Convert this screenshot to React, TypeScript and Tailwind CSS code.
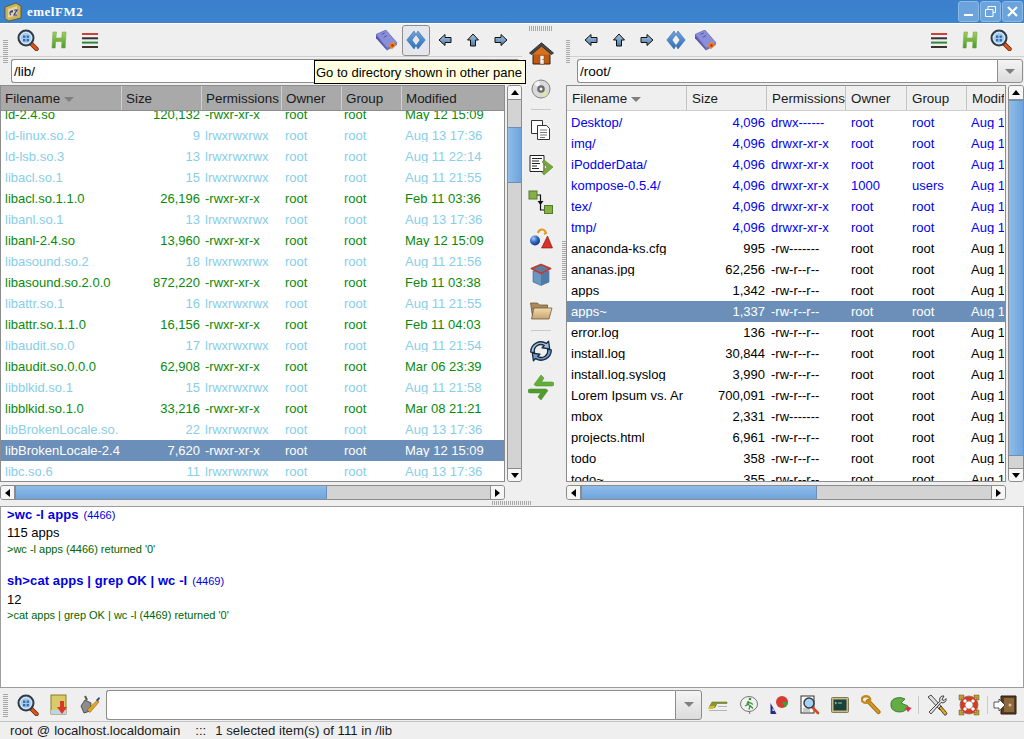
import type { ReactNode } from 'react'

type Row = { name: string; size: string; perm: string; owner?: string; group?: string; date: string; kind: 'exe' | 'link' | 'dir' | 'file'; selected?: boolean }

const leftRows: Row[] = [
  { name: 'ld-2.4.so', size: '120,132', perm: '-rwxr-xr-x', date: 'May 12 15:09', kind: 'exe' },
  { name: 'ld-linux.so.2', size: '9', perm: 'lrwxrwxrwx', date: 'Aug 13 17:36', kind: 'link' },
  { name: 'ld-lsb.so.3', size: '13', perm: 'lrwxrwxrwx', date: 'Aug 11 22:14', kind: 'link' },
  { name: 'libacl.so.1', size: '15', perm: 'lrwxrwxrwx', date: 'Aug 11 21:55', kind: 'link' },
  { name: 'libacl.so.1.1.0', size: '26,196', perm: '-rwxr-xr-x', date: 'Feb 11 03:36', kind: 'exe' },
  { name: 'libanl.so.1', size: '13', perm: 'lrwxrwxrwx', date: 'Aug 13 17:36', kind: 'link' },
  { name: 'libanl-2.4.so', size: '13,960', perm: '-rwxr-xr-x', date: 'May 12 15:09', kind: 'exe' },
  { name: 'libasound.so.2', size: '18', perm: 'lrwxrwxrwx', date: 'Aug 11 21:56', kind: 'link' },
  { name: 'libasound.so.2.0.0', size: '872,220', perm: '-rwxr-xr-x', date: 'Feb 11 03:38', kind: 'exe' },
  { name: 'libattr.so.1', size: '16', perm: 'lrwxrwxrwx', date: 'Aug 11 21:55', kind: 'link' },
  { name: 'libattr.so.1.1.0', size: '16,156', perm: '-rwxr-xr-x', date: 'Feb 11 04:03', kind: 'exe' },
  { name: 'libaudit.so.0', size: '17', perm: 'lrwxrwxrwx', date: 'Aug 11 21:54', kind: 'link' },
  { name: 'libaudit.so.0.0.0', size: '62,908', perm: '-rwxr-xr-x', date: 'Mar 06 23:39', kind: 'exe' },
  { name: 'libblkid.so.1', size: '15', perm: 'lrwxrwxrwx', date: 'Aug 11 21:58', kind: 'link' },
  { name: 'libblkid.so.1.0', size: '33,216', perm: '-rwxr-xr-x', date: 'Mar 08 21:21', kind: 'exe' },
  { name: 'libBrokenLocale.so.', size: '22', perm: 'lrwxrwxrwx', date: 'Aug 13 17:36', kind: 'link' },
  { name: 'libBrokenLocale-2.4', size: '7,620', perm: '-rwxr-xr-x', date: 'May 12 15:09', kind: 'exe', selected: true },
  { name: 'libc.so.6', size: '11', perm: 'lrwxrwxrwx', date: 'Aug 13 17:36', kind: 'link' },
]

const rightRows: Row[] = [
  { name: 'Desktop/', size: '4,096', perm: 'drwx------', date: 'Aug 1', kind: 'dir' },
  { name: 'img/', size: '4,096', perm: 'drwxr-xr-x', date: 'Aug 1', kind: 'dir' },
  { name: 'iPodderData/', size: '4,096', perm: 'drwxr-xr-x', date: 'Aug 1', kind: 'dir' },
  { name: 'kompose-0.5.4/', size: '4,096', perm: 'drwxr-xr-x', owner: '1000', group: 'users', date: 'Aug 1', kind: 'dir' },
  { name: 'tex/', size: '4,096', perm: 'drwxr-xr-x', date: 'Aug 1', kind: 'dir' },
  { name: 'tmp/', size: '4,096', perm: 'drwxr-xr-x', date: 'Aug 1', kind: 'dir' },
  { name: 'anaconda-ks.cfg', size: '995', perm: '-rw-------', date: 'Aug 1', kind: 'file' },
  { name: 'ananas.jpg', size: '62,256', perm: '-rw-r--r--', date: 'Aug 1', kind: 'file' },
  { name: 'apps', size: '1,342', perm: '-rw-r--r--', date: 'Aug 1', kind: 'file' },
  { name: 'apps~', size: '1,337', perm: '-rw-r--r--', date: 'Aug 1', kind: 'file', selected: true },
  { name: 'error.log', size: '136', perm: '-rw-r--r--', date: 'Aug 1', kind: 'file' },
  { name: 'install.log', size: '30,844', perm: '-rw-r--r--', date: 'Aug 1', kind: 'file' },
  { name: 'install.log.syslog', size: '3,990', perm: '-rw-r--r--', date: 'Aug 1', kind: 'file' },
  { name: 'Lorem Ipsum vs. Ar', size: '700,091', perm: '-rw-r--r--', date: 'Aug 1', kind: 'file' },
  { name: 'mbox', size: '2,331', perm: '-rw-------', date: 'Aug 1', kind: 'file' },
  { name: 'projects.html', size: '6,961', perm: '-rw-r--r--', date: 'Aug 1', kind: 'file' },
  { name: 'todo', size: '358', perm: '-rw-r--r--', date: 'Aug 1', kind: 'file' },
  { name: 'todo~', size: '355', perm: '-rw-r--r--', date: 'Aug 1', kind: 'file' },
]

const kindColor = {
  exe: 'text-[#0a8a0a]',
  link: 'text-[#87cee8]',
  dir: 'text-[#0000f0]',
  file: 'text-black',
}

/* icons */

function Defs() {
  return (
    <svg className="absolute w-0 h-0">
      <defs>
        <linearGradient id="arrow" x1="0" y1="0" x2="0" y2="1">
          <stop offset="0" stopColor="#a9c4de" />
          <stop offset="1" stopColor="#4d7ca8" />
        </linearGradient>
        <linearGradient id="hgreen" x1="0" y1="0" x2="0" y2="1">
          <stop offset="0" stopColor="#a3cf5c" />
          <stop offset="1" stopColor="#4c9a2a" />
        </linearGradient>
        <linearGradient id="folder" x1="0" y1="0" x2="0" y2="1">
          <stop offset="0" stopColor="#f3dcb0" />
          <stop offset="1" stopColor="#c9a36c" />
        </linearGradient>
        <linearGradient id="diamond" x1="0" y1="0" x2="0" y2="1">
          <stop offset="0" stopColor="#6fa3dc" />
          <stop offset="1" stopColor="#3070b8" />
        </linearGradient>
        <radialGradient id="ball" cx=".35" cy=".3" r=".8">
          <stop offset="0" stopColor="#a8c8f0" />
          <stop offset=".5" stopColor="#2f66c4" />
          <stop offset="1" stopColor="#122c66" />
        </radialGradient>
      </defs>
    </svg>
  )
}

function Magnifier() {
  return (
    <svg width="22" height="22" viewBox="0 0 22 22">
      <path d="M13.5 14l6 6" stroke="#5a2a10" strokeWidth="4.4" strokeLinecap="round" />
      <path d="M14 14.500l5.500 5.500" stroke="#e0521b" strokeWidth="3" strokeLinecap="round" />
      <circle cx="9" cy="9" r="7.500" fill="#cfe3f5" stroke="#2f3b45" strokeWidth="2" />
      <circle cx="9" cy="9" r="5" fill="#a9c9ea" />
      <rect x="6" y="6.500" width="2.400" height="2.400" fill="#2f6fb5" />
      <rect x="9.600" y="6.500" width="2.400" height="2.400" fill="#2f6fb5" />
      <rect x="6" y="10" width="2.400" height="2.400" fill="#2f6fb5" />
      <rect x="9.600" y="10" width="2.400" height="2.400" fill="#2f6fb5" />
    </svg>
  )
}

function HIcon() {
  return (
    <svg width="18" height="20" viewBox="0 0 18 20">
      <path d="M3 2h3.500L5.800 8h6L12.300 2H16l-.8 16h-3.600l.3-6.500H5.600L5.200 18H2z" fill="url(#hgreen)" stroke="#6fa848" strokeWidth=".6" />
    </svg>
  )
}

function Lines() {
  return (
    <svg width="16" height="15" viewBox="0 0 16 15">
      <rect y="0" width="16" height="2" fill="#d0403a" />
      <rect y="4.300" width="16" height="2" fill="#333" />
      <rect y="8.600" width="16" height="2" fill="#2d8a3a" />
      <rect y="13" width="16" height="2" fill="#40302c" />
    </svg>
  )
}

function Book() {
  return (
    <svg width="22" height="21" viewBox="0 0 20 19">
      <path d="M0 4L9 0l10 11.500-9 5z" fill="#8a8fdc" stroke="#5c60ac" strokeWidth=".6" />
      <path d="M0 4v3.500l10 11v-2z" fill="#565aa8" />
      <path d="M10 16.500l9-5v2l-9 5z" fill="#6d71c0" />
      <path d="M5 4l3-1.400M7 6.500l3-1.400" stroke="#4a4e9a" strokeWidth=".8" />
      <path d="M11 14l4-3.500 3.500 3-4 4z" fill="#e8862a" />
      <circle cx="15" cy="14" r="1.300" fill="#c8381c" />
    </svg>
  )
}

function Diamond() {
  return (
    <svg width="20" height="20" viewBox="0 0 20 20">
      <path d="M8 1L.8 10 8 19l2-3.500L6 10l4-5.500z" fill="url(#diamond)" stroke="#2c639f" strokeWidth=".5" strokeLinejoin="round" />
      <path d="M12 1l7.200 9L12 19l-2-3.500L14 10l-4-5.500z" fill="url(#diamond)" stroke="#2c639f" strokeWidth=".5" strokeLinejoin="round" />
    </svg>
  )
}

function ArrowLeft() {
  return (
    <svg width="14" height="14" viewBox="0 0 14 14">
      <path d="M7 1.500L1 7l6 5.500V9.500h6v-5H7z" fill="url(#arrow)" stroke="#111" strokeWidth="1" strokeLinejoin="round" />
    </svg>
  )
}

function ArrowRight() {
  return (
    <svg width="14" height="14" viewBox="0 0 14 14">
      <path d="M7 1.500L13 7l-6 5.500V9.500H1v-5h6z" fill="url(#arrow)" stroke="#111" strokeWidth="1" strokeLinejoin="round" />
    </svg>
  )
}

function ArrowUp() {
  return (
    <svg width="14" height="14" viewBox="0 0 14 14">
      <path d="M1.500 7L7 1l5.500 6H9.500v6h-5V7z" fill="url(#arrow)" stroke="#111" strokeWidth="1" strokeLinejoin="round" />
    </svg>
  )
}

function Home() {
  return (
    <svg width="25" height="23" viewBox="0 0 25 23">
      <path d="M4 10h17v12H4z" fill="#c05a12" stroke="#3c2008" strokeWidth="1" />
      <path d="M12.500 3.500L21 10.500v2H4v-2z" fill="#d5701c" />
      <path d="M.5 11L12.500.8 24.500 11l-2 1.500-10-8.500-10 8.500z" fill="#45494e" stroke="#1d1f22" strokeWidth=".8" strokeLinejoin="round" />
      <rect x="11" y="13.500" width="4" height="8.500" fill="#f4f4f4" stroke="#7a4a1c" strokeWidth=".5" />
      <rect x="13.500" y="17" width="1" height="1" fill="#333" />
    </svg>
  )
}

function Cd() {
  return (
    <svg width="20" height="20" viewBox="0 0 20 20">
      <circle cx="10" cy="10" r="9" fill="#d9d9d9" stroke="#7f7f7f" />
      <path d="M10 10L3 5a9 9 0 0 1 5-3.500z" fill="#f6f6f6" />
      <path d="M10 10l7 5a9 9 0 0 1-5 3.500z" fill="#dfe6a8" />
      <circle cx="10" cy="10" r="3.800" fill="#6a6a6a" />
      <circle cx="10" cy="10" r="1.500" fill="#f2f2f2" />
    </svg>
  )
}

function Copy() {
  return (
    <svg width="22" height="22" viewBox="0 0 22 22">
      <path d="M1.500 1.500h11v13h-11z" fill="#fff" stroke="#333" />
      <path d="M7.500 6.500h9l3 3v11h-12z" fill="#fff" stroke="#333" />
      <path d="M10 11h7M10 13.500h7M10 16h7M10 18.500h5" stroke="#777" />
    </svg>
  )
}

function MoveDoc() {
  return (
    <svg width="25" height="24" viewBox="0 0 25 24">
      <path d="M1 1.500h14v16H1z" fill="#fff" stroke="#222" />
      <path d="M3 4.500h10M3 7h7M3 9.500h8M3 12h5M3 14.500h7" stroke="#222" strokeWidth="1.200" />
      <path d="M15 6l9 7-9 8-2-2.500 5-5.500-5-5z" fill="#7aa83a" stroke="#4f7d20" strokeWidth=".6" />
    </svg>
  )
}

function TreeIcon() {
  return (
    <svg width="26" height="24" viewBox="0 0 26 24">
      <path d="M8 5h4.500v15h4" stroke="#111" strokeWidth="1.200" fill="none" />
      <path d="M9.500 11h6l-3 4z" fill="#111" />
      <rect x="1" y="1" width="8" height="8" fill="#87b04a" stroke="#557a26" />
      <rect x="16.500" y="15.500" width="8" height="8" fill="#87b04a" stroke="#557a26" />
    </svg>
  )
}

function Shapes() {
  return (
    <svg width="24" height="22" viewBox="0 0 24 22">
      <path d="M12.500 21l6-12 5 12z" fill="#d8302a" stroke="#7d1412" strokeWidth=".6" strokeLinejoin="round" />
      <circle cx="6" cy="13.500" r="5" fill="url(#ball)" />
      <path d="M9 6a4 4 0 0 1 7-2l1 2-2 1" fill="none" stroke="#e09a20" strokeWidth="2" />
    </svg>
  )
}

function BoxIcon() {
  return (
    <svg width="22" height="23" viewBox="0 0 22 23">
      <path d="M3 8v11l8 3.500 8-3.500V8z" fill="#6a97c2" stroke="#41648a" strokeWidth=".6" />
      <path d="M11 11v11.500V11l8-3v11l-8 3.500z" fill="#4f7ba6" />
      <path d="M1.500 5.500L11 1.500l9.500 4L11 10.500z" fill="#5c7f9f" stroke="#bf3a30" strokeWidth="1.800" strokeLinejoin="round" />
    </svg>
  )
}

function FolderOpen() {
  return (
    <svg width="24" height="20" viewBox="0 0 24 20">
      <path d="M1.500 3h7l2 2h8v4H3l1 10z" fill="#b0895a" stroke="#5f4a2f" strokeWidth=".7" />
      <path d="M5 8h18l-3 11H2.500z" fill="url(#folder)" stroke="#5f4a2f" strokeWidth=".7" />
    </svg>
  )
}

function Refresh() {
  return (
    <svg width="26" height="26" viewBox="0 0 24 24">
      <path d="M2.500 13a9.500 9.500 0 0 1 14.500-8l2-2 1 7-7-1 2-2a6 6 0 0 0-9 6.500z" fill="#9dc0e4" stroke="#1c2a3a" strokeWidth="1.200" strokeLinejoin="round" />
      <path d="M21.500 11a9.500 9.500 0 0 1-14.500 8l-2 2-1-7 7 1-2 2a6 6 0 0 0 9-6.500z" fill="#6c9bd0" stroke="#1c2a3a" strokeWidth="1.200" strokeLinejoin="round" />
    </svg>
  )
}

function Swap() {
  return (
    <svg width="26" height="25" viewBox="0 0 26 25">
      <path d="M13 0l-7 9.500 2 1.500H24a1.500 1.500 0 0 0 0-4H13.500l2.500-4z" fill="#64ae3a" stroke="#3f8a24" strokeWidth=".5" strokeLinejoin="round" />
      <path d="M13 25l7-9.500-2-1.500H2a1.500 1.500 0 0 0 0 4h10.500l-2.500 4z" fill="#4f9c2c" stroke="#3f8a24" strokeWidth=".5" strokeLinejoin="round" />
    </svg>
  )
}

function BookmarkDown() {
  return (
    <svg width="18" height="22" viewBox="0 0 18 22">
      <rect x="1" y="1" width="15" height="19" fill="#d8cc6a" stroke="#8b7a2a" />
      <path d="M1 16h15v4H1z" fill="#bcd4ea" />
      <path d="M10 7h4v6h3l-5 7-5-7h3z" fill="#d83a2a" />
    </svg>
  )
}

function Brush() {
  return (
    <svg width="20" height="20" viewBox="0 0 20 20">
      <path d="M5 1l2 4" stroke="#555" strokeWidth="2" />
      <path d="M1 11l4-6 6 3-1 8-6 2z" fill="#8d8d8d" stroke="#333" strokeWidth=".8" />
      <path d="M7 15L17.500 5l1.500 2L10 17.500z" fill="#e3a820" stroke="#6b5010" strokeWidth=".5" />
      <path d="M16 5l3-3 1 1.500-2.500 3z" fill="#2a4a9a" />
    </svg>
  )
}

function Pen() {
  return (
    <svg width="20" height="14" viewBox="0 0 20 14">
      <path d="M4 4h15v1.500H9l-2 4H1z" fill="#8a9a2a" stroke="#55601c" strokeWidth=".5" />
      <path d="M2 8h5L5 11H0z" fill="#d2c030" />
      <path d="M10 8h9v1H10zM1 12h18v1H1z" fill="#b5b5b5" />
    </svg>
  )
}

function Runner() {
  return (
    <svg width="20" height="20" viewBox="0 0 20 20">
      <ellipse cx="10" cy="9" rx="8.500" ry="7.500" fill="#f2f2f2" stroke="#777" />
      <path d="M11 19l-1-3" stroke="#777" />
      <circle cx="11" cy="4" r="1.300" fill="#39953a" />
      <path d="M10 6l-2 3 3 1.500-1 4M10 9l-4 2M8 7l4 1 2 1.500M11 10.500l3 3" stroke="#39953a" strokeWidth="1.300" fill="none" />
    </svg>
  )
}

function Pie() {
  return (
    <svg width="20" height="20" viewBox="0 0 20 20">
      <circle cx="13" cy="7" r="6" fill="#d63a32" />
      <path d="M13 7h6a6 6 0 0 1-3 5.200z" fill="#3aa03a" />
      <path d="M1.500 19V8l6 11z" fill="#252a8c" />
      <path d="M3.500 16V13l2 3z" fill="#eee" />
    </svg>
  )
}

function DocSearch() {
  return (
    <svg width="20" height="20" viewBox="0 0 20 20">
      <rect x="1" y="1" width="13" height="17" fill="#fafafa" stroke="#333" />
      <path d="M3 14h7M3 16h7" stroke="#999" />
      <path d="M12 12l6 6" stroke="#d9481c" strokeWidth="2.600" strokeLinecap="round" />
      <circle cx="9" cy="8" r="5" fill="#a9d0ef" stroke="#2f3b45" strokeWidth="1.400" />
    </svg>
  )
}

function Terminal() {
  return (
    <svg width="18" height="16" viewBox="0 0 18 16">
      <rect x=".5" y=".5" width="17" height="15" rx="1" fill="#c8b98a" stroke="#857a56" />
      <rect x="2.500" y="2.500" width="13" height="11" fill="#18423a" />
      <path d="M4 5l1.500 1L4 7M7 6h4" stroke="#d7e8d7" strokeWidth=".8" fill="none" />
    </svg>
  )
}

function KeyIcon() {
  return (
    <svg width="20" height="20" viewBox="0 0 20 20">
      <path d="M7 6l10.500 11" stroke="#a87414" strokeWidth="4.200" strokeLinecap="round" />
      <path d="M7 6l10.500 11" stroke="#d39a2a" strokeWidth="2" strokeLinecap="round" />
      <ellipse cx="5" cy="4.500" rx="4.200" ry="3.300" fill="none" stroke="#c08a1e" strokeWidth="2.400" />
    </svg>
  )
}

function Leaf() {
  return (
    <svg width="22" height="17" viewBox="0 0 22 17">
      <path d="M1 7a8.500 6 0 0 1 14-4l-4 4 7 3a8.500 6 0 0 1-17 0z" fill="#62ad44" stroke="#2c6b1c" strokeWidth=".8" />
      <path d="M15 12l3 4 3.500-4-3-1.200z" fill="#d8304a" />
    </svg>
  )
}

function Tools() {
  return (
    <svg width="22" height="22" viewBox="0 0 22 22">
      <path d="M2 3l3-2 11 12-2 3z" fill="#ddd" stroke="#222" strokeWidth=".8" />
      <path d="M18 2a3.500 3.500 0 0 0-4 5L3 18l2 2L15 8.500a3.500 3.500 0 0 0 5-4l-2 2-2-1z" fill="#ddd" stroke="#222" strokeWidth=".8" />
      <path d="M13 14l2-2 5.500 6.500a1.500 1.500 0 0 1-2.500 2z" fill="#e3a820" stroke="#222" strokeWidth=".8" />
    </svg>
  )
}

function Lifebuoy() {
  return (
    <svg width="24" height="24" viewBox="0 0 24 24">
      <path d="M2 2h5v2.500H4.500V7H2zM22 2h-5v2.500h2.500V7H22zM2 22h5v-2.500H4.500V17H2zM22 22h-5v-2.500h2.500V17H22z" fill="#caa01e" stroke="#333" strokeWidth=".4" />
      <circle cx="12" cy="12" r="6.500" fill="#fff" stroke="#d83a1e" strokeWidth="4.500" />
      <path d="M7 7l3 3M17 7l-3 3M7 17l3-3M17 17l-3-3" stroke="#fff" strokeWidth="3" />
      <circle cx="12" cy="12" r="9" fill="none" stroke="#5a2010" strokeWidth=".5" />
      <circle cx="12" cy="12" r="4" fill="none" stroke="#5a2010" strokeWidth=".5" />
    </svg>
  )
}

function ExitDoor() {
  return (
    <svg width="24" height="20" viewBox="0 0 24 20">
      <path d="M8 1h15v18H8z" fill="#5a3a1e" stroke="#2c1c0c" />
      <path d="M11 3h10v14H11z" fill="#8a6a3a" />
      <circle cx="17" cy="10" r="1.500" fill="#e8b89a" />
      <path d="M1 7h5V4l6 6-6 6v-3H1z" fill="#fff" stroke="#333" strokeWidth=".8" />
    </svg>
  )
}

/* widgets */

function Grip({ className }: { className: string }) {
  return <div className={`shrink-0 bg-[repeating-linear-gradient(0deg,#a8a8a8_0px,#a8a8a8_1px,transparent_1px,transparent_2px)] ${className}`} />
}

function GripV({ className }: { className: string }) {
  return <div className={`shrink-0 bg-[repeating-linear-gradient(90deg,#a8a8a8_0px,#a8a8a8_1px,transparent_1px,transparent_2px)] ${className}`} />
}

function Tool({ children, wide, active, bar }: { children: ReactNode; wide?: boolean; active?: boolean; bar?: boolean }) {
  return (
    <div className={`h-[31px] flex items-center justify-center shrink-0 ${bar ? 'w-[30.5px]' : wide ? 'w-[31px]' : 'w-[28px]'} ${active ? 'rounded-[3px] border border-[#8f8f8f] bg-[#e6e7ec]' : ''}`}>
      {children}
    </div>
  )
}

function Caret() {
  return <div className="w-0 h-0 border-x-[5px] border-x-transparent border-t-[5px] border-t-[#7f7f7f]" />
}

function Combo({ value }: { value: string }) {
  return (
    <div className="flex h-[24px]">
      <div className="flex-1 min-w-0 bg-white border border-[#8c8c8c] border-r-0 rounded-l-[3px] flex items-center pl-[2px] pt-[2px] text-[13.5px] text-black leading-none">{value}</div>
      <div className="w-[26px] shrink-0 border border-[#8c8c8c] rounded-r-[3px] bg-gradient-to-b from-[#f4f4f4] to-[#dcdcdc] flex items-center justify-center">
        <Caret />
      </div>
    </div>
  )
}

function TriUp() {
  return <div className="w-0 h-0 border-x-[4px] border-x-transparent border-b-[5px] border-b-black" />
}
function TriDown() {
  return <div className="w-0 h-0 border-x-[4px] border-x-transparent border-t-[5px] border-t-black" />
}
function TriLeft() {
  return <div className="w-0 h-0 border-y-[4px] border-y-transparent border-r-[5px] border-r-black" />
}
function TriRight() {
  return <div className="w-0 h-0 border-y-[4px] border-y-transparent border-l-[5px] border-l-black" />
}

function VScroll({ top, thumb, width }: { top: string; thumb: string; width: string }) {
  return (
    <div className={`${width} shrink-0 flex flex-col border border-[#8c8c8c] rounded-[3px] bg-[#d3d3d3] overflow-hidden`}>
      <div className="h-[14px] shrink-0 bg-[#f6f6f6] border-b border-[#8c8c8c] flex items-center justify-center"><TriUp /></div>
      <div className="flex-1 min-h-0 flex flex-col">
        <div className={top} />
        <div className={`${thumb} bg-gradient-to-r from-[#8fbcea] to-[#6ea4dc] border-y border-[#6d8fb3]`} />
      </div>
      <div className="h-[13px] shrink-0 bg-[#f6f6f6] border-t border-[#8c8c8c] flex items-center justify-center"><TriDown /></div>
    </div>
  )
}

function HScroll({ thumb }: { thumb: string }) {
  return (
    <div className="h-[15px] flex border border-[#8c8c8c] rounded-[3px] bg-[#d3d3d3] overflow-hidden">
      <div className="w-[14px] shrink-0 bg-[#f6f6f6] border-r border-[#8c8c8c] flex items-center justify-center"><TriLeft /></div>
      <div className="flex-1 min-w-0 flex">
        <div className={`${thumb} bg-gradient-to-b from-[#8fbcea] to-[#6ea4dc] border-x border-[#6d8fb3]`} />
      </div>
      <div className="w-[14px] shrink-0 bg-[#f6f6f6] border-l border-[#8c8c8c] flex items-center justify-center"><TriRight /></div>
    </div>
  )
}

const leftCols = ['w-[121px]', 'w-[80px]', 'w-[80px]', 'w-[60px]', 'w-[60px]']
const rightCols = ['w-[120px]', 'w-[80px]', 'w-[79px]', 'w-[61px]', 'w-[60px]']
const leftPads = ['pl-[4px]', 'pl-[3px]', 'pl-[3px]', 'pl-[2px]', 'pl-[3px]']
const rightPads = ['pl-[4px]', 'pl-[4px]', 'pl-[5px]', 'pl-[5px]', 'pl-[4px]']

function Header({ dark, last, lastWidth, widths }: { dark?: boolean; last: string; lastWidth: string; widths: string[] }) {
  const labels = ['Filename', 'Size', 'Permissions', 'Owner', 'Group']
  const pad = dark ? 'pl-[4px]' : 'pl-[5px]'
  return (
    <div className={`h-[25px] shrink-0 flex text-[13.4px] leading-none border-b ${dark ? 'bg-[#a9a9a9] border-[#8c8c8c]' : 'bg-[#efefef] border-[#cfcfcf]'} text-[#1a1a1a]`}>
      {labels.map((l, i) => (
        <div key={l} className={`${widths[i]} shrink-0 flex items-center ${pad} pt-[2px] whitespace-nowrap overflow-hidden border-r ${dark ? 'border-[#d0d0d0]' : 'border-[#c4c4c4]'}`}>
          {l}
          {i === 0 && <div className="ml-[4px] w-0 h-0 border-x-[5px] border-x-transparent border-t-[5px] border-t-[#7f7f7f]" />}
        </div>
      ))}
      <div className={`${lastWidth} flex items-center ${pad} pt-[2px] overflow-hidden whitespace-nowrap`}>{last}</div>
    </div>
  )
}

function FileRow({ row, widths, lastWidth, pads }: { row: Row; widths: string[]; lastWidth: string; pads: string[] }) {
  const color = row.selected ? 'text-white bg-[#6b8fb8]' : kindColor[row.kind]
  return (
    <div className={`h-[21px] flex items-center text-[13px] leading-none whitespace-nowrap ${color}`}>
      <div className={`${widths[0]} shrink-0 pl-[4px] overflow-hidden`}>{row.name}</div>
      <div className={`${widths[1]} shrink-0 text-right pr-[2px]`}>{row.size}</div>
      <div className={`${widths[2]} shrink-0 ${pads[1]}`}>{row.perm}</div>
      <div className={`${widths[3]} shrink-0 ${pads[2]}`}>{row.owner ?? 'root'}</div>
      <div className={`${widths[4]} shrink-0 ${pads[3]}`}>{row.group ?? 'root'}</div>
      <div className={`${lastWidth} ${pads[4]} overflow-hidden`}>{row.date}</div>
    </div>
  )
}

export default function App() {
  return (
    <div className="relative w-[1024px] h-[739px] overflow-hidden bg-[#efefef] flex flex-col font-['Liberation_Sans',sans-serif] text-black">
      <Defs />

      {/* title bar */}
      <div className="h-[23px] shrink-0 bg-gradient-to-b from-[#3a80cc] to-[#3c84ce] flex items-center">
        <svg width="20" height="20" viewBox="0 0 20 20" className="ml-[3px]">
          <path d="M2 5l11-4 5 3v12L6 19l-4-2z" fill="#c8b460" stroke="#5a4a20" strokeWidth=".8" />
          <path d="M5 7l9-3v9l-9 3z" fill="#e4d890" />
          <path d="M7 10h3M8 13c-2-1-1-5 2-4M11 8h3l-3 5h3" stroke="#3838a8" strokeWidth="1.200" fill="none" />
        </svg>
        <div className="ml-[4px] text-[13px] font-bold text-white font-['Liberation_Serif',serif] tracking-[0.5px] leading-none">emelFM2</div>
        <div className="ml-auto flex gap-[1px] mr-[1px]">
          <div className="w-[21px] h-[21px] rounded-[3px] bg-[#6ba3dc] border border-[#8dbbe8] flex items-end justify-center pb-[5px]">
            <div className="w-[9px] h-[2px] bg-white" />
          </div>
          <div className="w-[21px] h-[21px] rounded-[3px] bg-[#6ba3dc] border border-[#8dbbe8] flex items-center justify-center">
            <svg width="11" height="11" viewBox="0 0 11 11" fill="none" stroke="white">
              <path d="M3 3V.5h7.500v6H8" />
              <path d="M.5 3.500h7.500v7H.5z" />
            </svg>
          </div>
          <div className="w-[21px] h-[21px] rounded-[3px] bg-[#6ba3dc] border border-[#8dbbe8] flex items-center justify-center">
            <svg width="11" height="11" viewBox="0 0 11 11" stroke="white" strokeWidth="2.200">
              <path d="M1 1l9 9M10 1l-9 9" />
            </svg>
          </div>
        </div>
      </div>
      <div className="h-px shrink-0 bg-white" />

      {/* panes */}
      <div className="h-[476px] shrink-0 flex">
        {/* left pane */}
        <div className="w-[522px] shrink-0 flex flex-col">
          <div className="h-[33px] shrink-0 flex items-center border-b border-[#d0d0d0]">
            <Grip className="w-[5px] h-[24px] ml-[3px] mr-[4px] mt-[22px]" />
            <Tool wide><Magnifier /></Tool>
            <Tool wide><HIcon /></Tool>
            <Tool wide><Lines /></Tool>
            <div className="flex-1" />
            <Tool wide><Book /></Tool>
            <Tool active><Diamond /></Tool>
            <div className="w-px" />
            <Tool><ArrowLeft /></Tool>
            <Tool><ArrowUp /></Tool>
            <Tool><ArrowRight /></Tool>
            <div className="w-[7px]" />
          </div>
          <div className="pl-[11px] pr-[2px] pt-[2px]"><Combo value="/lib/" /></div>
          <div className="flex-1 min-h-0 flex mt-[1px] pt-px">
            <div className="w-[505px] shrink-0 border border-[#8c8c8c] bg-white flex flex-col overflow-hidden">
              <Header dark last="Modified" lastWidth="w-[103px]" widths={leftCols} />
              <div className="flex-1 min-h-0 overflow-hidden">
                <div className="-mt-[7px]">
                  {leftRows.map((r) => (
                    <FileRow key={r.name} row={r} widths={leftCols} pads={leftPads} lastWidth="w-[103px]" />
                  ))}
                </div>
              </div>
            </div>
            <div className="w-[2px]" />
            <VScroll top="h-[27px]" thumb="h-[56px]" width="w-[15px]" />
          </div>
          <div className="h-[18px] shrink-0 pt-[3px] w-[505px]"><HScroll thumb="w-[312px]" /></div>
        </div>

        {/* action column */}
        <div className="w-[44px] shrink-0 flex flex-col items-center relative pr-[6px]">
          <GripV className="w-[24px] h-[5px] mt-[2px] mb-[4px]" />
          {[<Home key="h" />, <Cd key="c" />].map((ic, i) => (
            <div key={i} className="h-[36px] flex items-center justify-center">{ic}</div>
          ))}
          <div className="h-px w-[20px] bg-[#c9c9c9] my-[2px]" />
          {[<Copy key="a" />, <MoveDoc key="b" />, <TreeIcon key="c" />, <Shapes key="d" />, <BoxIcon key="e" />, <FolderOpen key="f" />].map((ic, i) => (
            <div key={i} className="h-[36px] flex items-center justify-center">{ic}</div>
          ))}
          <div className="h-px w-[20px] bg-[#c9c9c9] my-[2px]" />
          {[<Refresh key="r" />, <Swap key="s" />].map((ic, i) => (
            <div key={i} className="h-[36px] flex items-center justify-center">{ic}</div>
          ))}
          <Grip className="absolute right-0 top-[216px] w-[4px] h-[40px]" />
        </div>

        {/* right pane */}
        <div className="flex-1 min-w-0 flex flex-col">
          <div className="h-[33px] shrink-0 flex items-center border-b border-[#d0d0d0]">
            <Grip className="w-[4px] h-[24px] ml-[0px] mr-[7px] mt-[22px]" />
            <Tool><ArrowLeft /></Tool>
            <Tool><ArrowUp /></Tool>
            <Tool><ArrowRight /></Tool>
            <div className="w-px" />
            <Tool><Diamond /></Tool>
            <Tool wide><Book /></Tool>
            <div className="flex-1" />
            <Tool wide><Lines /></Tool>
            <Tool wide><HIcon /></Tool>
            <Tool wide><Magnifier /></Tool>
            <div className="w-[8px]" />
          </div>
          <div className="pl-[11px] pr-[1px] pt-[2px]"><Combo value="/root/" /></div>
          <div className="flex-1 min-h-0 flex mt-[1px] pt-px">
            <div className="flex-1 min-w-0 border border-[#8c8c8c] bg-white flex flex-col overflow-hidden">
              <Header last="Modified" lastWidth="w-[37px]" widths={rightCols} />
              <div className="flex-1 min-h-0 overflow-hidden pt-px">
                {rightRows.map((r) => (
                  <FileRow key={r.name} row={r} widths={rightCols} pads={rightPads} lastWidth="w-[37px]" />
                ))}
              </div>
            </div>
            <div className="w-[2px]" />
            <VScroll top="h-0" thumb="h-[356px]" width="w-[16px]" />
          </div>
          <div className="h-[18px] shrink-0 pt-[3px] mr-[18px]"><HScroll thumb="w-[236px]" /></div>
        </div>
      </div>

      <div className="h-[6px] shrink-0 flex justify-center items-center">
        <GripV className="w-[40px] h-[4px]" />
      </div>

      {/* command output */}
      <div className="h-[182px] shrink-0 bg-white border border-[#9c9c9c] pl-[6px]">
        <div className="h-[17px] flex items-baseline text-[#0000e0] leading-[15px]">
          <span className="text-[13px] font-bold tracking-[0.1px]">&gt;wc -l apps</span>
          <span className="text-[11px] ml-[5px]">(4466)</span>
        </div>
        <div className="h-[17px] text-[13px] leading-[17px]">115 apps</div>
        <div className="h-[17px] text-[11px] leading-[17px] text-[#006400]">&gt;wc -l apps (4466) returned '0'</div>
        <div className="h-[15px]" />
        <div className="h-[18px] flex items-baseline text-[#0000e0] leading-[15px]">
          <span className="text-[13px] font-bold tracking-[0.1px]">sh&gt;cat apps | grep OK | wc -l</span>
          <span className="text-[11px] ml-[5px]">(4469)</span>
        </div>
        <div className="h-[17px] text-[13px] leading-[17px]">12</div>
        <div className="h-[17px] text-[11px] leading-[15px] text-[#006400]">&gt;cat apps | grep OK | wc -l (4469) returned '0'</div>
      </div>

      {/* command bar */}
      <div className="h-[34px] shrink-0 flex items-center border-b border-[#c4c4c4]">
        <Grip className="w-[5px] h-[24px] ml-[3px] mr-[4px]" />
        <Tool wide><Magnifier /></Tool>
        <Tool wide><BookmarkDown /></Tool>
        <Tool wide><Brush /></Tool>
        <div className="w-[596px] ml-px shrink-0 h-[30px]">
          <div className="flex h-[30px]">
            <div className="flex-1 bg-white border border-[#8c8c8c] border-r-0 rounded-l-[3px]" />
            <div className="w-[27px] border border-[#8c8c8c] rounded-r-[3px] bg-gradient-to-b from-[#f4f4f4] to-[#dcdcdc] flex items-center justify-center"><Caret /></div>
          </div>
        </div>
        <div className="w-[0.75px]" />
        <Tool bar><Pen /></Tool>
        <Tool bar><Runner /></Tool>
        <Tool bar><Pie /></Tool>
        <Tool bar><DocSearch /></Tool>
        <Tool bar><Terminal /></Tool>
        <Tool bar><KeyIcon /></Tool>
        <Tool bar><Leaf /></Tool>
        <div className="w-px h-[18px] bg-[#c9c9c9] ml-[1.5px] mr-[3px]" />
        <Tool wide><Tools /></Tool>
        <div className="w-px" />
        <Tool wide><Lifebuoy /></Tool>
        <div className="w-px h-[18px] bg-[#c9c9c9] mx-[2px]" />
        <Tool wide><ExitDoor /></Tool>
      </div>

      {/* status */}
      <div className="flex-1 flex items-center pl-[10px] text-[13.2px] leading-none whitespace-nowrap text-[#1a1a1a]">
        <span>root</span>
        <span className="ml-[4px]">@</span>
        <span className="ml-[4px]">localhost.localdomain</span>
        <span className="ml-[15px]">:::</span>
        <span className="ml-[9px]">1 selected item(s) of 111 in /lib</span>
      </div>

      {/* tooltip */}
      <div className="absolute left-[314px] top-[60px] w-[212px] h-[24px] bg-[#ffffe1] border border-black flex items-center pl-[1px] text-[13px] leading-none whitespace-nowrap">
        Go to directory shown in other pane
      </div>
    </div>
  )
}
